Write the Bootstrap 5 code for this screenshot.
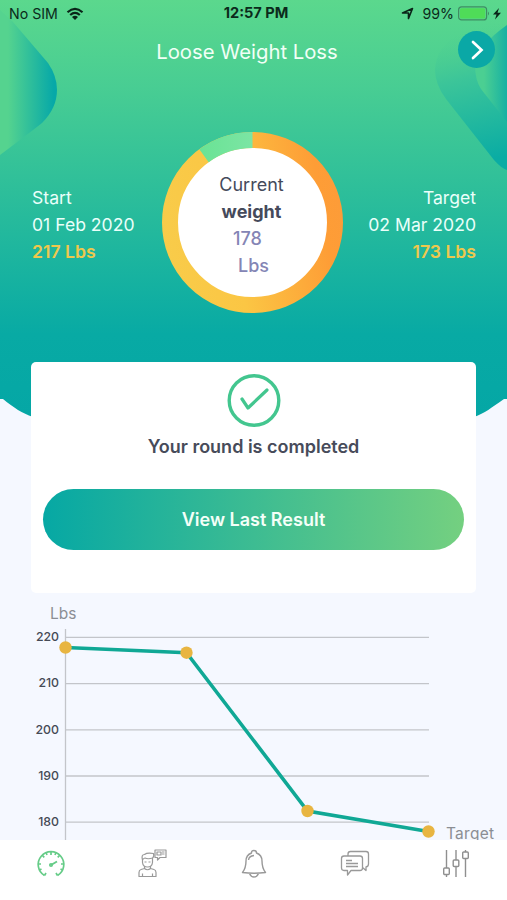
<!DOCTYPE html>
<html lang="en">
<head>
<meta charset="utf-8">
<meta name="viewport" content="width=device-width, initial-scale=1">
<title>Loose Weight Loss</title>
<link href="https://cdn.jsdelivr.net/npm/bootstrap@5.3.0/dist/css/bootstrap.min.css" rel="stylesheet">
<style>
body{font-family:Inter,"Liberation Sans",sans-serif;background:#f5f8ff;color:#454a5b}
.screen{width:507px;height:900px}
.backdrop{z-index:0}
.layer{z-index:1}
.status{height:27px;font-size:14.2px;line-height:27px;color:#0b2a1b;padding:0 6px 0 9px}
.status-side{width:170px}
.status-time{padding-left:2px;font-size:14.6px}
.title-row{height:50px}
.title{font-size:20.3px;line-height:26px;color:#f1fff6;padding-right:13px}
.next{width:37px;height:37px;background:#0aa8a6;right:12px;top:4px}
.summary{height:181px;margin-top:55px;padding:0 31px}
.side{width:130px;font-size:17.6px;line-height:27px;color:#eafffa;padding-top:3px}
.side-start{width:128px;padding-left:1px}
.amount{color:#efc84c;font-weight:600}
.dial{width:181px;height:181px}
.dial-text{font-size:18px;line-height:27px;padding:4px 2px 0 0}
.dial-value{color:#8485b5;font-weight:500}
.result{width:445px;height:231px;margin-top:49px;border-radius:5px}
.done-text{font-size:18px;line-height:26px;font-weight:600;color:#474b5a;padding-top:4px}
.btn-result,.btn-result:hover{width:421px;height:61px;margin-top:29px;color:#f4fff8;font-size:18px;font-weight:600;background:linear-gradient(90deg,#06a8a4,#74d080)}
.chart{height:247px}
.chart text{font-family:Inter,"Liberation Sans",sans-serif}
.tabs{height:60px}
.tabs a{width:101px}
</style>
</head>
<body>
<div class="screen position-relative overflow-hidden d-flex flex-column">
  <svg class="backdrop position-absolute top-0 start-0" width="507" height="480" viewBox="0 0 507 480" aria-hidden="true">
    <defs>
      <linearGradient id="sky" x1="0" y1="0" x2="0" y2="1"><stop offset="0" stop-color="#5bd88d"/><stop offset=".2" stop-color="#48cd93"/><stop offset=".76" stop-color="#08aaa4"/><stop offset="1" stop-color="#04a6a6"/></linearGradient>
      <linearGradient id="blobL" gradientUnits="userSpaceOnUse" x1="8" x2="54" y1="0" y2="0"><stop offset="0" stop-color="#55d38f"/><stop offset="1" stop-color="#06a8a8"/></linearGradient>
      <linearGradient id="blobR" gradientUnits="userSpaceOnUse" x1="460" y1="32" x2="490" y2="160"><stop offset="0" stop-color="#50d090" stop-opacity="0"/><stop offset=".35" stop-color="#3cc599"/><stop offset="1" stop-color="#0aaca4"/></linearGradient>
      <linearGradient id="blobIn" gradientUnits="userSpaceOnUse" x1="484" x2="508" y1="0" y2="0"><stop offset="0" stop-color="#4bcf92"/><stop offset="1" stop-color="#14afa4"/></linearGradient>
    </defs>
    <path d="M0 0H507V399H504C491 408 485 413 474 417C420 438 350 440 253 440S90 438 33 417C22 413 14 408 3 399H0Z" fill="url(#sky)"/>
    <path d="M0 10L13 22L48 63Q57 76 57 90Q57 108 42 123Q28 134 0 155Z" fill="url(#blobL)"/>
    <path d="M507 170Q501 168 494 160L446 99Q435 84 435 70Q436 46 461 33Q485 23 507 23Z" fill="url(#blobR)"/>
    <path d="M507 122L481 89Q475 80 475 65Q477 46 507 25Z" fill="url(#blobIn)"/>
  </svg>

  <header class="layer">
    <div class="status d-flex justify-content-between">
      <div class="status-side d-flex align-items-center gap-2"><span>No SIM</span>
        <svg width="18" height="14" viewBox="0 0 18 14"><path d="M1.500 5.200Q9-1.500 16.500 5.200M4.200 8Q9 3.800 13.800 8" fill="none" stroke="#0a2418" stroke-width="2.200"/><path d="M6 10Q9 7.500 12 10L9 13Z" fill="#0a2418"/></svg>
      </div>
      <div class="status-time fw-bold">12:57 PM</div>
      <div class="status-side d-flex align-items-center justify-content-end">
        <svg class="me-2" width="13" height="13" viewBox="0 0 13 13"><path d="M1.500 6L11.500 1.500L7.500 11.500V6Z" fill="none" stroke="#0a2418" stroke-width="1.600" stroke-linejoin="round"/></svg>
        <span class="me-1">99%</span>
        <svg width="43" height="15" viewBox="0 0 43 15"><rect x=".6" y=".9" width="28" height="13" rx="3" fill="none" stroke="#3f8d62" stroke-width="1.200"/><rect x="2" y="2.300" width="25.200" height="10.200" rx="1.500" fill="#4fdc58"/><path d="M30 5.500Q32 7.500 30 9.500Z" fill="#3f8d62"/><path d="M41 2L35 8.500H38.500L37 13.500L43 6.800H39.500Z" fill="#0a2418"/></svg>
      </div>
    </div>
    <div class="title-row position-relative d-flex justify-content-center align-items-center">
      <h1 class="title fw-normal m-0">Loose Weight Loss</h1>
      <a href="#" class="next position-absolute rounded-circle d-flex align-items-center justify-content-center" aria-label="Next">
        <svg width="14" height="22" viewBox="0 0 14 22"><path d="M3 3L11.500 11L3 19" fill="none" stroke="#fff" stroke-width="2.700" stroke-linecap="round"/></svg>
      </a>
    </div>
  </header>

  <main class="layer">
    <section class="summary d-flex justify-content-between align-items-center">
      <div class="side side-start">Start<br><span>01 Feb 2020</span><br><span class="amount">217 Lbs</span></div>
      <div class="dial position-relative d-flex align-items-center justify-content-center text-center">
        <svg class="position-absolute top-0 start-0" width="181" height="181" viewBox="0 0 181 181">
          <defs><linearGradient id="gold" gradientUnits="userSpaceOnUse" x1="0" x2="181" y1="120" y2="90"><stop offset="0" stop-color="#f8cc4a"/><stop offset=".4" stop-color="#fbc644"/><stop offset=".9" stop-color="#fe9d36"/><stop offset="1" stop-color="#fd9c38"/></linearGradient>
          <linearGradient id="mint"><stop offset="0" stop-color="#69e394"/><stop offset="1" stop-color="#7ce5a4"/></linearGradient></defs>
          <circle cx="90.500" cy="90.500" r="76" fill="#fff"/>
          <circle cx="90.500" cy="90.500" r="82.500" fill="none" stroke="url(#gold)" stroke-width="16"/>
          <path d="M37.300 17.300A90.500 90.500 0 0 1 90.500 0V16A74.500 74.500 0 0 0 46.700 30.200Z" fill="url(#mint)"/>
        </svg>
        <div class="dial-text position-relative">Current<br><span class="fw-bold">weight</span><br><span class="dial-value pe-2">178</span><br><span class="dial-value ps-1">Lbs</span></div>
      </div>
      <div class="side text-end">Target<br><span>02 Mar 2020</span><br><span class="amount">173 Lbs</span></div>
    </section>

    <section class="result card border-0 mx-auto align-items-center">
      <svg class="mt-2" width="54" height="60" viewBox="0 0 54 60"><circle cx="27" cy="30.500" r="24.800" fill="none" stroke="#43c68f" stroke-width="3.400"/><path d="M15 29L21 38L40 20" fill="none" stroke="#43c68f" stroke-width="3.200" stroke-linecap="round" stroke-linejoin="round"/></svg>
      <p class="done-text m-0">Your round is completed</p>
      <a href="#" class="btn btn-result rounded-pill border-0 d-flex align-items-center justify-content-center">View Last Result</a>
    </section>

    <svg class="chart d-block" width="507" viewBox="0 593 507 247">
      <g stroke="#c3c5ca" stroke-width="1.300"><path d="M65.500 629V840M65.500 637.300H429M65.500 683.700H429M65.500 729.800H429M65.500 776H429M65.500 822.200H429"/></g>
      <path d="M65.500 647.500L186.500 652.700L307.500 811L428.500 831.500" fill="none" stroke="#10a895" stroke-width="3.600"/>
      <g fill="#e8b541"><circle cx="65.500" cy="647.500" r="6.200"/><circle cx="186.500" cy="652.700" r="6.200"/><circle cx="307.500" cy="811" r="6.200"/><circle cx="428.500" cy="831.500" r="6.200"/></g>
      <g font-size="12.300" font-weight="500" fill="#454a55" text-anchor="end"><text x="59" y="641">220</text><text x="59" y="687.300">210</text><text x="59" y="733.500">200</text><text x="59" y="779.500">190</text><text x="59" y="826">180</text></g>
      <g font-size="15.500" fill="#8b8e94"><text x="50" y="619">Lbs</text><text x="446" y="839" textLength="48">Target</text></g>
    </svg>
  </main>

  <nav class="tabs layer bg-white d-flex justify-content-between" aria-label="Main">
    <a href="#" class="d-flex justify-content-center pt-2" aria-label="Dashboard"><svg width="30" height="32" viewBox="0 0 30 32" fill="none" stroke="#66cc88" stroke-width="1.700"><path d="M8.500 27.500A12.800 12.800 0 1 1 21.500 27.500"/><path d="M2 16H5M28 16H25M15 3.500V7M6 7L8.300 9.300M24 7L21.700 9.300M8.500 27.500L10 25M21.500 27.500L20 25M10 4.500L11 7M20 4.500L19 7M3.500 22L5.500 21M26.500 22L24.500 21"/><path d="M15 17L21 13.500" stroke-width="2"/><circle cx="15" cy="17" r="1.200"/></svg></a>
    <a href="#" class="d-flex justify-content-center pt-2" aria-label="Coach"><svg width="30" height="32" viewBox="0 0 30 32" fill="none" stroke="#999" stroke-width="1.200" stroke-linejoin="round"><path d="M7.500 18V20.500L4 21.500Q2 22 2 24.500V28.500H19V24.500Q19 22 17 21.500L13.500 20.500V18M7.500 20.500Q10.500 23 13.500 20.500M5.500 28V25.500M15.500 28V25.500"/><path d="M5.500 12V14.500Q6 19 10.500 19Q15 19 15.500 14.500V10Q11 11.500 8 10Q6 10.500 5.500 12ZM5.500 12Q4 6.500 7.500 6.500Q10 4.500 16.500 5.500Q17.500 8.500 15.500 10M7.500 14H9.500M11.500 14H13.500"/><path d="M18 2H29V9.500H23L20.500 12V9.500H18ZM20 4H24V7H20ZM25 4H27.500M25 6H27.500"/></svg></a>
    <a href="#" class="d-flex justify-content-center pt-2" aria-label="Alerts"><svg width="30" height="32" viewBox="0 0 30 32" fill="none" stroke="#999" stroke-width="1.400" stroke-linejoin="round"><path d="M12.500 5Q12.500 2.500 15 2.500Q17.500 2.500 17.500 5Q23 7 23 13Q23 20 26.500 24.500Q15 26 3.500 24.500Q7 20 7 13Q7 7 12.500 5ZM10.500 25.500Q12 29 15 29Q18 29 19.500 25.500M9.500 12Q10 8 15 7.500"/></svg></a>
    <a href="#" class="d-flex justify-content-center pt-2" aria-label="Messages"><svg width="30" height="32" viewBox="0 0 30 32" fill="none" stroke="#999" stroke-width="1.300" stroke-linejoin="round"><path d="M4 8H20Q22.500 8 22.500 10.500V20Q22.500 22.500 20 22.500H11L7.500 27V22.500H4Q1.500 22.500 1.500 20V10.500Q1.500 8 4 8Z"/><path d="M8 8V6Q8 3.500 10.500 3.500H26Q28.500 3.500 28.500 6V16Q28.500 18.500 26 19V22.500L22.500 19.500M6 12.500H12M6 15.500H18M6 18.500H18"/></svg></a>
    <a href="#" class="d-flex justify-content-center pt-2" aria-label="Settings"><svg width="30" height="32" viewBox="0 0 30 32" fill="none" stroke="#8f8f8f" stroke-width="1.400"><path d="M4.500 2V20M4.500 27V29M14 2V12M14 19V29M23.500 2V4M23.500 10.500V29"/><rect x="1.700" y="20" width="5.600" height="6.500" rx="1"/><rect x="11.200" y="12" width="5.600" height="6.500" rx="1"/><rect x="20.700" y="4" width="5.600" height="6.500" rx="1"/></svg></a>
  </nav>
</div>
<script src="https://cdn.jsdelivr.net/npm/bootstrap@5.3.0/dist/js/bootstrap.bundle.min.js"></script>
</body>
</html>
